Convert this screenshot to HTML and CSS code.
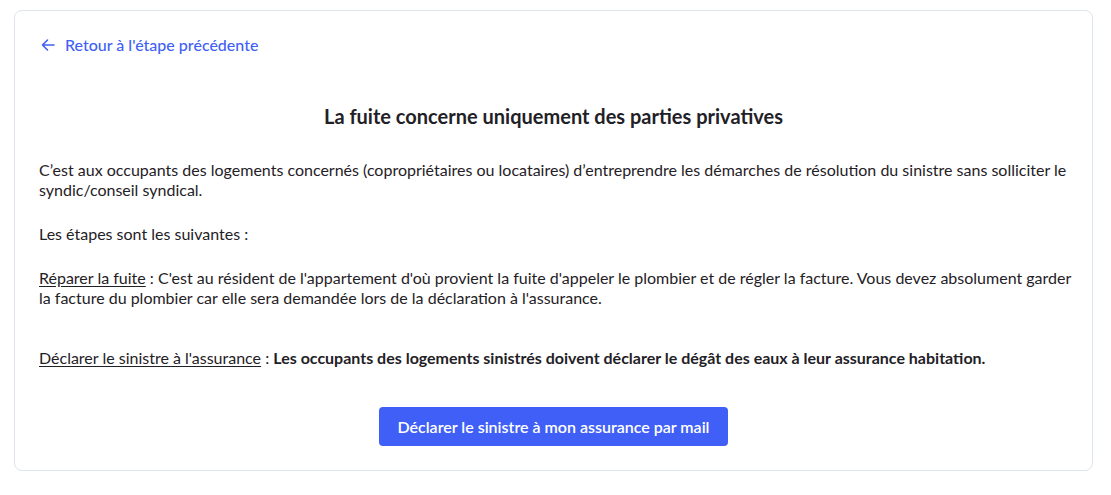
FILE: index.html
```html
<!DOCTYPE html>
<html lang="fr">
<head>
<meta charset="utf-8">
<link rel="stylesheet" href="styles.css">
</head>
<body>
<div class="card">
  <a class="back" href="#">
    <svg class="back-icon" width="16" height="16" viewBox="0 0 16 16" fill="none" stroke="currentColor" stroke-width="1.6" stroke-linecap="round" stroke-linejoin="round"><path d="M14 8H2.5M7.5 3 2.5 8l5 5"/></svg>
    <span>Retour à l'étape précédente</span>
  </a>
  <h1 class="title">La fuite concerne uniquement des parties privatives</h1>
  <div class="content">
    <p class="para">C’est aux occupants des logements concernés (copropriétaires ou locataires) d’entreprendre les démarches de résolution du sinistre sans solliciter le syndic/conseil syndical.</p>
    <p class="para">Les étapes sont les suivantes :</p>
    <p class="para"><span class="u">Réparer la fuite</span> : C'est au résident de l'appartement d'où provient la fuite d'appeler le plombier et de régler la facture. Vous devez absolument garder la facture du plombier car elle sera demandée lors de la déclaration à l'assurance.</p>
    <p class="para para-spaced"><span class="u">Déclarer le sinistre à l'assurance</span> : <strong>Les occupants des logements sinistrés doivent déclarer le dégât des eaux à leur assurance habitation.</strong></p>
  </div>
  <div class="actions">
    <button class="btn" type="button">Déclarer le sinistre à mon assurance par mail</button>
  </div>
</div>
</body>
</html>
```
FILE: styles.css
```css
* { box-sizing: border-box; }
html, body { margin: 0; padding: 0; background: #fff; }
body {
  font-family: Lato, "Noto Sans", sans-serif;
  color: #1f2126;
  padding: 10px 18px 0 14px;
}
.card {
  border: 1px solid #dde5ee;
  border-radius: 8px;
  padding: 24px 24px 24px 24px;
  background: #fff;
}
.back {
  display: inline-flex;
  align-items: center;
  gap: 9px;
  color: #3f5ff5;
  text-decoration: none;
  font-size: 16px;
  font-weight: 500;
  line-height: 20px;
  margin-left: 1px;
}
.back-icon { display: block; }
.title {
  margin: 46px 0 0;
  text-align: center;
  font-size: 20px;
  line-height: 28px;
  font-weight: 700;
  color: #1f2126;
}
.content { margin-top: 30px; margin-right: -14px; }
.para {
  margin: 0 0 24px;
  font-size: 16px;
  line-height: 20px;
}
.para-spaced { margin-top: 40px; margin-bottom: 0; }
.u { text-decoration: underline; text-underline-offset: 2px; }
.para strong { font-weight: 700; }
.actions {
  display: flex;
  justify-content: center;
  margin-top: 39px;
}
.btn {
  border: 0;
  border-radius: 4px;
  background: #3f5ff7;
  color: #fff;
  font-family: Lato, "Noto Sans", sans-serif;
  font-size: 16px;
  font-weight: 600;
  height: 39px;
  padding: 0 18px;
  cursor: pointer;
}
```
